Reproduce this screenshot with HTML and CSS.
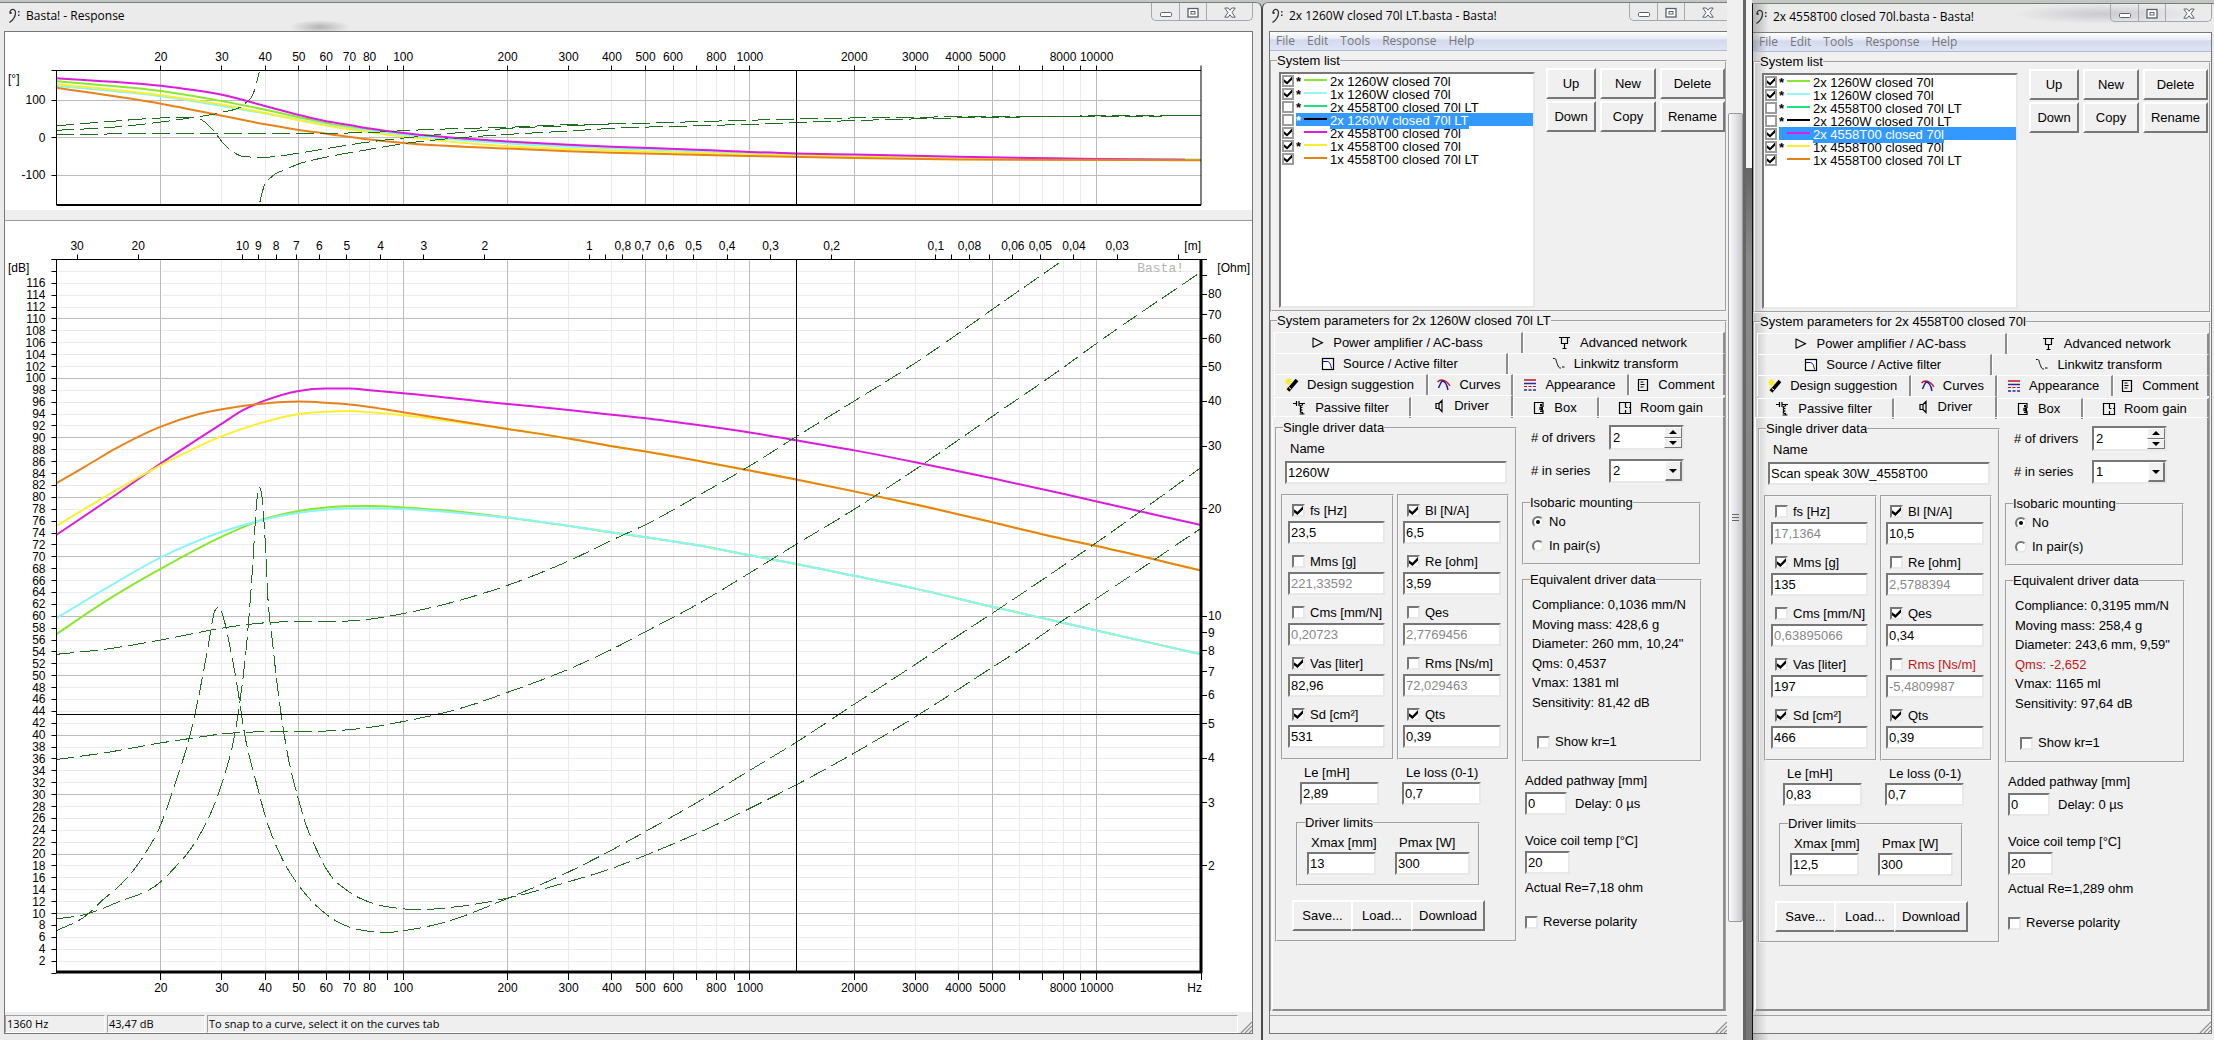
FILE: index.html
```html
<!DOCTYPE html>
<html lang="en">
<head>
<meta charset="utf-8">
<title>Basta! - Response</title>
<link rel="stylesheet" href="styles.css">
<script src="app.js" defer></script>
</head>
<body>
<svg class="sprite" aria-hidden="true">
  <symbol id="i-clef" viewBox="0 0 12 16"><path d="M2 5.500c-.6-5 5.500-5.500 5.500-.8C7.500 9 5 12 1.500 14.500" fill="none" stroke="#333" stroke-width="1.300"/><circle cx="2.800" cy="5" r="1.100" fill="#333"/><path d="M10 3h1.500v1.500H10zM10 6.500h1.500V8H10z" fill="#333"/></symbol>
  <symbol id="i-min" viewBox="0 0 12 12"><rect x=".5" y="5.500" width="11" height="4" rx="1" fill="#fff" stroke="#5a606b"/></symbol>
  <symbol id="i-max" viewBox="0 0 12 12"><rect x="1" y="1.500" width="10" height="8.500" fill="#fff" stroke="#5a606b" stroke-width="1.300"/><rect x="4" y="4.500" width="4" height="2.500" fill="#fff" stroke="#5a606b"/></symbol>
  <symbol id="i-close" viewBox="0 0 12 12"><path d="M.8 1h3.400L6 3.300 7.800 1h3.400L8 5.500l3.200 4.700H7.800L6 7.700l-1.800 2.500H.8L4 5.500z" fill="#fff" stroke="#5a606b"/></symbol>
  <symbol id="i-grip" viewBox="0 0 12 12"><path d="M1 12 12 1M5 12l7-7M9 12l3-3" stroke="#8d8d8d" stroke-width="1.200"/></symbol>
  <symbol id="i-amp" viewBox="0 0 14 14"><path d="M2 1.500v10M2 2l9.500 4.700L2 11.300" fill="none" stroke="#000" stroke-width="1.100"/></symbol>
  <symbol id="i-net" viewBox="0 0 14 14"><path d="M1 1.500h11M3.500 1.500v6h6v-6M6.500 7.500v5M4.500 12.500h4" fill="none" stroke="#000" stroke-width="1.200"/></symbol>
  <symbol id="i-source" viewBox="0 0 14 14"><rect x="1.500" y="1.500" width="11" height="11" fill="#fff" stroke="#000" stroke-width="1.200"/><path d="M2 4.500h4c2.500 0 3.500 2 4.500 7" fill="none" stroke="#00a"/></symbol>
  <symbol id="i-link" viewBox="0 0 14 14"><path d="M1 1.500h1.500c2 0 1.500 3 3 6 1 2.500 1.500 3.500 3 3.500h.5M10 10h2.500" fill="none" stroke="#000"/></symbol>
  <symbol id="i-wand" viewBox="0 0 14 14"><path d="M3.500 0v7M0 3.500h7M1 1l5 5M6 1 1 6M2 8v4" stroke="#f4ee20" stroke-width="1.200"/><path d="M3 12.500 12 2" stroke="#000" stroke-width="3.600"/><path d="M4 9.500 6 11" stroke="#fff"/></symbol>
  <symbol id="i-curves" viewBox="0 0 14 14"><path d="M.5 4C3 1 8.500.5 13 8" fill="none" stroke="#d01818" stroke-width="1.400"/><path d="M1.500 10C3 7 3.500 5 5 3c3 0 5 4 6 9" fill="none" stroke="#1818b0" stroke-width="1.400"/></symbol>
  <symbol id="i-look" viewBox="0 0 14 14"><path d="M1 2h12" stroke="#c01414" stroke-width="1.500"/><path d="M1 5.500h12" stroke="#2828a0" stroke-width="1.500"/><path d="M1 8.500h12" stroke="#c01414" stroke-width="1.200" stroke-dasharray="3 1.500"/><path d="M1 12h12" stroke="#2828a0" stroke-width="1.500" stroke-dasharray="3 1.500"/></symbol>
  <symbol id="i-note" viewBox="0 0 14 14"><path d="M2.500 1.500h9v11h-9zM4.500 4h3M4.500 6.500h4M4.500 9h3" fill="none" stroke="#000" stroke-width="1.200"/></symbol>
  <symbol id="i-passive" viewBox="0 0 14 14"><path d="M0 2.500h3M3.500 0v5M6 0v5M6 2.500h6M9.500 2.500v1.500c-3 0-3 2.500 0 2.500-3 0-3 2.500 0 2.500-3 0-3 2.500 0 2.500v1M6.500 13h5" fill="none" stroke="#000" stroke-width="1.200"/></symbol>
  <symbol id="i-driver" viewBox="0 0 14 14"><path d="M4 4.500h3v5H4zM7 4.500 10 1.500v11L7 9.500" fill="none" stroke="#000" stroke-width="1.200"/></symbol>
  <symbol id="i-box" viewBox="0 0 14 14"><path d="M11 1.500H2.500v11H11v-3L8 8.500v-2l3-1zM8 10.500h3M11 1.500v3" fill="none" stroke="#000" stroke-width="1.200"/><path d="M8 3h2v2H8zM9 6h2v3H9z"/></symbol>
  <symbol id="i-room" viewBox="0 0 14 14"><path d="M1.500 1.500h11v11h-11zM7.500 1.500v5M7.500 9v3.500M7.500 6.500h2M11 6.500h1.500" fill="none" stroke="#000" stroke-width="1.200"/></symbol>
</svg>

<main class="desktop">
  <section class="window window--response">
    <header class="titlebar titlebar--response">
      <svg class="clef"><use href="#i-clef"/></svg>
      <h1 class="title">Basta! - Response</h1>
      <div class="caption">
        <button class="caption-btn" aria-label="Minimize"><svg class="glyph"><use href="#i-min"/></svg></button>
        <button class="caption-btn" aria-label="Maximize"><svg class="glyph"><use href="#i-max"/></svg></button>
        <button class="caption-btn caption-btn--close" aria-label="Close"><svg class="glyph"><use href="#i-close"/></svg></button>
      </div>
    </header>
    <div class="client">
      <svg class="chart chart--phase" id="phase" role="img" aria-label="Phase"></svg>
      <div class="splitter"></div>
      <svg class="chart chart--level" id="level" role="img" aria-label="Level and impedance"></svg>
      <footer class="status">
        <span class="pane pane--freq">1360 Hz</span>
        <span class="pane pane--level">43,47 dB</span>
        <span class="pane pane--hint">To snap to a curve, select it on the curves tab</span>
        <svg class="grip"><use href="#i-grip"/></svg>
      </footer>
    </div>
  </section>
  <section class="window window--system window--first" id="system-a"></section>
  <div class="divider">
    <div class="scroll"><div class="thumb"><i></i><i></i><i></i></div></div>
    <div class="edge"></div>
  </div>
  <section class="window window--system window--second" id="system-b"></section>
</main>
</body>
</html>
```
FILE: styles.css
```css
* { box-sizing: border-box; }

body {
  margin: 0;
  background: #c4c6c4;
  color: #000;
  font: 13px/16px "Liberation Sans", Arial, sans-serif;
}

button, input, select { font: inherit; color: inherit; }

.sprite { display: none; }

.desktop {
  display: flex;
  min-height: 100vh;
  overflow: hidden;
}

/* windows */

.window {
  display: flex;
  flex-direction: column;
  margin-top: 2px;
  padding-bottom: 6px;
  border-top: 1px solid #7b7f7b;
  background: #ebebeb;
}

.window--response {
  flex: 1;
  min-width: 0;
  padding-left: 4px;
  padding-right: 8px;
  border-right: 1px solid #4a4a4a;
  border-radius: 0 6px 0 0;
}

.window--first {
  flex: 0 0 465px;
  padding-left: 6px;
  border-left: 1px solid #4a4a4a;
  border-radius: 6px 0 0 0;
  overflow: hidden;
}

.window--second {
  flex: 0 0 462px;
  margin-top: 3px;
  padding-right: 2px;
  border-left: 1px solid #111;
  background: linear-gradient(90deg, #b0b0b0, #ebebeb 16px);
}

.titlebar {
  display: flex;
  align-items: flex-start;
  height: 28px;
  padding-left: 2px;
}

.titlebar--response {
  padding-left: 4px;
  background: radial-gradient(ellipse 30px 7px at 316px 24px, #b4b4b4, transparent);
}

.window--first .titlebar { margin-right: -4px; }

.window--second .titlebar {
  background: radial-gradient(ellipse 90px 10px at 350px 10px, #c9c9cf, transparent);
}

.clef {
  width: 12px;
  height: 16px;
  margin: 5px 6px 0 0;
}

.title {
  flex: 1;
  margin: 5px 0 0;
  font: 12px/16px "Open Sans", "Noto Sans", sans-serif;
  white-space: nowrap;
}

.caption {
  display: flex;
  border: 1px solid #a4a7ab;
  border-top: 0;
  border-radius: 0 0 5px 5px;
}

.caption-btn {
  width: 27px;
  height: 17px;
  padding: 2px 0 0;
  border: 0;
  border-left: 1px solid #a4a7ab;
  background: none;
  line-height: 0;
}

.caption-btn:first-child { border-left: 0; }
.caption-btn--close { width: 46px; }

.glyph {
  width: 12px;
  height: 12px;
}

.client {
  flex: 1;
  display: flex;
  flex-direction: column;
  min-width: 0;
  border: 1px solid #777;
  background: #efefef;
}

.window--system .client { background: #f0f0f0; }
.window--first .client { border-right: 0; }
.window--second .client {
  border-left: 0;
  background: linear-gradient(90deg, #c4c4c4, #f0f0f0 14px);
}

/* charts */

.chart {
  display: block;
  width: 100%;
  background: #fff;
  font: 12px "Liberation Sans", Arial, sans-serif;
}

.chart--phase { height: 178px; }
.chart--level { flex: 1; min-height: 400px; }
.splitter { height: 11px; border-bottom: 1px solid #999; }

.grid-minor { stroke: #ebebeb; }
.grid-major { stroke: #bcbcbc; }
.axis { stroke: #000; }
.axis--thick { stroke-width: 3; }
.curve { fill: none; stroke-width: 2; }
.curve--dashed {
  stroke: #1c6e1c;
  stroke-width: 1;
  stroke-dasharray: 18 6;
  shape-rendering: crispEdges;
}
.watermark { font: 13px "Liberation Mono", monospace; fill: #b4b4b4; }

/* status bar */

.status {
  display: flex;
  align-items: flex-end;
  gap: 2px;
  height: 21px;
  padding-top: 3px;
  font: 11px/16px "Open Sans", "Noto Sans", sans-serif;
}

.pane {
  padding-left: 1px;
  border: 1px solid;
  border-color: #a0a0a0 #fff #fff #a0a0a0;
  white-space: nowrap;
}

.pane--freq { width: 100px; }
.pane--level { width: 98px; }
.pane--hint { flex: 1; }

/* menu */

.menu {
  display: flex;
  gap: 12px;
  height: 19px;
  padding: 1px 6px 0;
  border-bottom: 1px solid #b4b9d0;
  background: linear-gradient(#fff, #e9edf7 35%, #d3daee 45%, #dfe4f3);
  font: 12px/16px "Open Sans", "Noto Sans", sans-serif;
}

.window--second .menu {
  background:
    linear-gradient(90deg, rgba(0, 0, 0, .25), transparent 14px),
    linear-gradient(#fff, #e9edf7 35%, #d3daee 45%, #dfe4f3);
}

.menu a {
  color: #777;
  text-decoration: none;
}

/* group boxes */

.group {
  min-width: 0;
  margin: 0;
  padding: 0;
  border: 2px groove #f4f4f4;
}

.group legend {
  margin-left: 5px;
  padding: 0;
  line-height: 15px;
}

.group--systems {
  margin-top: 2px;
  padding: 0 0 2px 7px;
}

.group--systems > legend,
.group--iso > legend,
.group--data > legend,
.group--limits > legend { margin-left: -2px; }

.group--driver > legend { margin-left: 2px; }

.systems {
  display: flex;
  gap: 11px;
}

.list {
  flex: 0 0 256px;
  height: 236px;
  margin: 4px 0 0;
  padding: 0;
  border: 2px solid;
  border-color: #777 #e8e8e8 #e8e8e8 #777;
  background: #fff;
  list-style: none;
}

.list li {
  display: flex;
  align-items: center;
  height: 13px;
  padding-left: 1px;
}

.list input[type="checkbox"] {
  width: 12px;
  height: 12px;
  border: 2px solid #9c9c9c;
}

.row {
  flex: 1;
  display: flex;
  height: 13px;
  margin-left: 2px;
}

.row b { width: 8px; }

.swatch {
  width: 23px;
  height: 2px;
  margin: 5px 3px 0 0;
}

.selected .row {
  background: #3399ff;
  color: #fff;
}

.selected .name { height: 16px; background: #3399ff; }

.actions {
  display: grid;
  grid-template-columns: 50px 56px 65px;
  gap: 2px 4px;
  align-content: start;
}

.btn {
  height: 31px;
  padding: 0;
  border: 2px solid;
  border-color: #fff #777 #777 #fff;
  background: #f0f0f0;
}

.group--params {
  flex: 1;
  display: flex;
  flex-direction: column;
  margin-top: 1px;
  border-bottom: 0;
}

/* tabs */

.tabs { padding: 4px 0 0 2px; }

.tab-row {
  display: grid;
  height: 21px;
}

.tab-row--1 { grid-template-columns: 249fr 202fr; }
.tab-row--2 { grid-template-columns: 234fr 217fr; }
.tab-row--3 { grid-template-columns: 154fr 85fr 116fr 96fr; }
.tab-row--4 { grid-template-columns: 137fr 102fr 86fr 126fr; align-items: end; }

.tab {
  display: flex;
  align-items: center;
  justify-content: center;
  gap: 8px;
  height: 21px;
  padding: 0 2px 1px 0;
  border: 0;
  border-top: 1px solid #fff;
  border-left: 1px solid #fff;
  border-right: 2px solid #8c8c8c;
  background: none;
  white-space: nowrap;
}

.tab--active {
  height: 23px;
  padding-bottom: 3px;
}

.tab svg {
  width: 14px;
  height: 14px;
}

.page {
  flex: 1;
  display: flex;
  gap: 5px;
  padding: 3px 0 0 2px;
  border: 1px solid #fff;
  border-right: 2px solid #8c8c8c;
  border-bottom: 2px solid #8c8c8c;
}

/* fields */

.field {
  display: block;
  width: 100%;
  height: 23px;
  padding: 0 1px 1px;
  border: 2px solid;
  border-color: #777 #e8e8e8 #e8e8e8 #777;
  border-radius: 0;
  background: #fff;
}

.field:read-only { color: #888; }

input[type="checkbox"], input[type="radio"] {
  appearance: none;
  flex: none;
  width: 13px;
  height: 13px;
  margin: 0;
  border: 2px solid;
  border-color: #777 #e8e8e8 #e8e8e8 #777;
  background: #fff;
}

input[type="checkbox"]:checked::before {
  content: "";
  display: block;
  height: 100%;
  background: #000;
  clip-path: polygon(0 35%, 38% 65%, 100% 0, 100% 40%, 38% 100%, 0 70%);
}

input[type="radio"] {
  width: 12px;
  height: 12px;
  border-radius: 50%;
}

input[type="radio"]:checked::before {
  content: "";
  display: block;
  width: 4px;
  height: 4px;
  margin: 2px;
  border-radius: 50%;
  background: #000;
}

.tick {
  display: flex;
  align-items: center;
  gap: 5px;
  white-space: nowrap;
}

/* left column */

.group--driver {
  flex: 0 0 242px;
  align-self: flex-start;
  padding: 5px 6px 9px 4px;
}

.name-field {
  display: grid;
  gap: 3px;
  margin: 0 2px 10px 4px;
}

.name-field label { padding-left: 5px; line-height: 18px; }

.boxes {
  display: grid;
  grid-template-columns: 113px 112px;
  gap: 3px;
}

.box {
  display: grid;
  gap: 7px;
  padding: 4px 7px 10px 5px;
  border: 2px groove #f4f4f4;
}

.box .tick { height: 21px; padding-left: 4px; }
.box--motor { padding: 4px 6px 10px 4px; }

.coil {
  display: grid;
  grid-template-columns: 79px 79px;
  gap: 23px;
  margin: 4px 0 10px 19px;
}

.stack label {
  display: block;
  padding-left: 4px;
  line-height: 18px;
  white-space: nowrap;
}

.group--limits {
  width: 184px;
  margin-left: 15px;
  padding: 4px 9px 9px 9px;
}

.limits {
  display: grid;
  grid-template-columns: 69px 75px;
  gap: 19px;
}

.file-actions {
  display: grid;
  grid-template-columns: 59px 60px 74px;
  margin: 14px 0 0 11px;
}

.file-actions .btn { border-right-width: 0; }
.file-actions .btn:last-child { border-right-width: 2px; }

/* right column */

.side { flex: 0 0 181px; }

.count {
  display: grid;
  grid-template-columns: 78px 75px;
  align-items: center;
  margin: 5px 0 9px 9px;
}

.count--series { margin-bottom: 12px; }

.combo {
  display: flex;
  height: 25px;
  border: 2px solid;
  border-color: #777 #e8e8e8 #e8e8e8 #777;
  background: #fff;
}

.count--series .combo { height: 24px; }

.combo input, .combo select {
  flex: 1;
  min-width: 0;
  padding: 0 0 0 2px;
  border: 0;
  background: none;
  appearance: none;
}

.combo input { appearance: textfield; }
.combo input::-webkit-inner-spin-button { display: none; }

.spin {
  display: grid;
  width: 18px;
}

.spin button, .drop {
  display: flex;
  align-items: center;
  justify-content: center;
  min-height: 0;
  padding: 0;
  border: 1px solid;
  border-color: #fff #777 #777 #fff;
  background: #f0f0f0;
}

.drop { width: 17px; border-width: 1px 2px 2px 1px; }

.up, .down {
  border: 4px solid transparent;
  border-top-width: 0;
  border-bottom: 4px solid #000;
}

.down {
  border-top: 4px solid #000;
  border-bottom-width: 0;
}

.group--iso {
  width: 179px;
  padding: 2px 0 7px 8px;
}

.group--iso .tick { height: 20px; }
.group--iso .tick + .tick { margin-top: 4px; }

.group--data {
  margin-top: 7px;
  width: 180px;
  height: 190px;
  padding: 8px 0 0 8px;
}

.data {
  margin: 0;
  padding: 0;
  list-style: none;
  line-height: 20px;
  white-space: nowrap;
}

.data li:nth-child(even) { line-height: 19px; }
.group--data .tick { margin: 22px 0 0 5px; }
.bad { color: #c01818; }

.extra {
  display: grid;
  justify-items: start;
  padding-left: 3px;
}

.extra label { white-space: nowrap; }
.extra .pathway { margin-top: 11px; }

.delay {
  display: flex;
  align-items: center;
  gap: 8px;
  margin: 3px 0 18px;
}

.delay .field { width: 42px; }
.extra .temp { width: 45px; margin: 2px 0 6px; }
.extra .tick { margin-top: 18px; }

.status--system {
  margin-top: 4px;
  height: 18px;
  padding: 0;
  border-top: 1px solid #a0a0a0;
  justify-content: flex-end;
}

.grip { width: 12px; height: 12px; }

/* bar between the two system windows */

.divider {
  flex: 0 0 25px;
  display: flex;
  background: #f0f0f0;
}

.scroll {
  flex: 0 0 16px;
  display: flex;
  flex-direction: column;
  padding: 113px 0 118px 1px;
}

.thumb {
  flex: 1;
  display: flex;
  flex-direction: column;
  align-items: center;
  justify-content: center;
  gap: 2px;
  border: 1px solid #999;
  border-radius: 2px;
  background: linear-gradient(90deg, #fafafa, #e4e4e8 50%, #c8c8cc);
}

.thumb i { width: 7px; height: 1px; background: #666; }

.edge {
  flex: 1;
  border-left: 3px solid #666;
  background: linear-gradient(#f4f4f4 168px, #666 168px, #8a8a8a 260px, #777);
}
```
FILE: app.js
```js
/* ---------- system windows ---------- */

const icon = (id, cls = '') => `<svg class="${cls}"><use href="#i-${id}"/></svg>`;

const systems = [
  ['2x 1260W closed 70l', '#8ae234', true, true],
  ['1x 1260W closed 70l', '#9af4f4', true, true],
  ['2x 4558T00 closed 70l LT', '#22e07a', false, true],
  ['2x 1260W closed 70l LT', '#000', false, true],
  ['2x 4558T00 closed 70l', '#e01ce0', true, false],
  ['1x 4558T00 closed 70l', '#f8ee30', true, true],
  ['1x 4558T00 closed 70l LT', '#e88018', true, false],
];

const tabRows = [
  [['amp', 'Power amplifier / AC-bass'], ['net', 'Advanced network']],
  [['source', 'Source / Active filter'], ['link', 'Linkwitz transform']],
  [['wand', 'Design suggestion'], ['curves', 'Curves'], ['look', 'Appearance'], ['note', 'Comment']],
  [['passive', 'Passive filter'], ['driver', 'Driver'], ['box', 'Box'], ['room', 'Room gain']],
];

const windows = [
  {
    host: 'system-a', title: '2x 1260W closed 70l LT.basta - Basta!', selected: 3,
    heading: '2x 1260W closed 70l LT', name: '1260W', drivers: 2, series: 2,
    suspension: [['fs [Hz]', '23,5', 1], ['Mms [g]', '221,33592', 0], ['Cms [mm/N]', '0,20723', 0], ['Vas [liter]', '82,96', 1], ['Sd [cm²]', '531', 1]],
    motor: [['Bl [N/A]', '6,5', 1], ['Re [ohm]', '3,59', 1], ['Qes', '2,7769456', 0], ['Rms [Ns/m]', '72,029463', 0], ['Qts', '0,39', 1]],
    data: ['Compliance: 0,1036 mm/N', 'Moving mass: 428,6 g', 'Diameter: 260 mm, 10,24"', 'Qms: 0,4537', 'Vmax: 1381 ml', 'Sensitivity: 81,42 dB'],
    le: '2,89', loss: '0,7', xmax: '13', pmax: '300', re: '7,18',
  },
  {
    host: 'system-b', title: '2x 4558T00 closed 70l.basta - Basta!', selected: 4,
    heading: '2x 4558T00 closed 70l', name: 'Scan speak 30W_4558T00', drivers: 2, series: 1,
    suspension: [['fs [Hz]', '17,1364', 0], ['Mms [g]', '135', 1], ['Cms [mm/N]', '0,63895066', 0], ['Vas [liter]', '197', 1], ['Sd [cm²]', '466', 1]],
    motor: [['Bl [N/A]', '10,5', 1], ['Re [ohm]', '2,5788394', 0], ['Qes', '0,34', 1], ['Rms [Ns/m]', '-5,4809987', 0], ['Qts', '0,39', 1]],
    data: ['Compliance: 0,3195 mm/N', 'Moving mass: 258,4 g', 'Diameter: 243,6 mm, 9,59"', 'Qms: -2,652', 'Vmax: 1165 ml', 'Sensitivity: 97,64 dB'],
    le: '0,83', loss: '0,7', xmax: '12,5', pmax: '300', re: '1,289',
  },
];

function parameter(host, [label, value, on]) {
  const id = `${host}-${label.split(' ')[0].toLowerCase()}`;
  const bad = value.startsWith('-') ? ' bad' : '';
  return `<div>
    <label class="tick${bad}"><input type="checkbox"${on ? ' checked' : ''}>${label}</label>
    <input class="field" id="${id}" type="text" aria-label="${label}" value="${value}"${on ? '' : ' readonly'}>
  </div>`;
}

function stack(host, key, label, value) {
  return `<div class="stack"><label for="${host}-${key}">${label}</label><input class="field" id="${host}-${key}" type="text" value="${value}"></div>`;
}

function systemWindow(w) {
  const h = w.host;
  return `
  <header class="titlebar">
    ${icon('clef', 'clef')}
    <h2 class="title">${w.title}</h2>
    <div class="caption">
      <button class="caption-btn" aria-label="Minimize">${icon('min', 'glyph')}</button>
      <button class="caption-btn" aria-label="Maximize">${icon('max', 'glyph')}</button>
      <button class="caption-btn caption-btn--close" aria-label="Close">${icon('close', 'glyph')}</button>
    </div>
  </header>
  <div class="client">
    <nav class="menu">${['File', 'Edit', 'Tools', 'Response', 'Help'].map(m => `<a href="#">${m}</a>`).join('')}</nav>
    <fieldset class="group group--systems">
      <legend>System list</legend>
      <div class="systems">
        <ul class="list">${systems.map(([name, color, on, star], i) => `
          <li${i === w.selected ? ' class="selected"' : ''}>
            <input type="checkbox" id="${h}-s${i}"${on ? ' checked' : ''}>
            <label class="row" for="${h}-s${i}"><b>${star ? '*' : ''}</b><span class="swatch" style="background:${color}"></span><span class="name">${name}</span></label>
          </li>`).join('')}
        </ul>
        <div class="actions">${['Up', 'New', 'Delete', 'Down', 'Copy', 'Rename'].map(b => `<button class="btn">${b}</button>`).join('')}</div>
      </div>
    </fieldset>
    <fieldset class="group group--params">
      <legend>System parameters for ${w.heading}</legend>
      <div class="tabs" role="tablist">${tabRows.map((row, i) => `
        <div class="tab-row tab-row--${i + 1}">${row.map(([ic, t]) =>
          `<button class="tab${t === 'Driver' ? ' tab--active' : ''}" role="tab">${icon(ic)}${t}</button>`).join('')}</div>`).join('')}
      </div>
      <div class="page">
        <fieldset class="group group--driver">
          <legend>Single driver data</legend>
          <div class="name-field"><label for="${h}-name">Name</label><input class="field" id="${h}-name" type="text" value="${w.name}"></div>
          <div class="boxes">
            <div class="box">${w.suspension.map(p => parameter(h, p)).join('')}</div>
            <div class="box box--motor">${w.motor.map(p => parameter(h, p)).join('')}</div>
          </div>
          <div class="coil">${stack(h, 'le', 'Le [mH]', w.le)}${stack(h, 'loss', 'Le loss (0-1)', w.loss)}</div>
          <fieldset class="group group--limits">
            <legend>Driver limits</legend>
            <div class="limits">${stack(h, 'xmax', 'Xmax [mm]', w.xmax)}${stack(h, 'pmax', 'Pmax [W]', w.pmax)}</div>
          </fieldset>
          <div class="file-actions"><button class="btn">Save...</button><button class="btn">Load...</button><button class="btn">Download</button></div>
        </fieldset>
        <div class="side">
          <div class="count"><label for="${h}-n"># of drivers</label>
            <div class="combo"><input id="${h}-n" type="number" value="${w.drivers}"><span class="spin"><button aria-label="More"><i class="up"></i></button><button aria-label="Fewer"><i class="down"></i></button></span></div></div>
          <div class="count count--series"><label for="${h}-series"># in series</label>
            <div class="combo"><select id="${h}-series"><option>${w.series}</option></select><span class="drop"><i class="down"></i></span></div></div>
          <fieldset class="group group--iso">
            <legend>Isobaric mounting</legend>
            <label class="tick"><input type="radio" name="${h}-iso" checked>No</label>
            <label class="tick"><input type="radio" name="${h}-iso">In pair(s)</label>
          </fieldset>
          <fieldset class="group group--data">
            <legend>Equivalent driver data</legend>
            <ul class="data">${w.data.map(d => `<li${d.includes(': -') ? ' class="bad"' : ''}>${d}</li>`).join('')}</ul>
            <label class="tick"><input type="checkbox">Show kr=1</label>
          </fieldset>
          <div class="extra">
            <label class="pathway" for="${h}-path">Added pathway [mm]</label>
            <div class="delay"><input class="field" id="${h}-path" type="text" value="0"><span>Delay: 0 µs</span></div>
            <label for="${h}-temp">Voice coil temp [°C]</label>
            <input class="field temp" id="${h}-temp" type="text" value="20">
            <span>Actual Re=${w.re} ohm</span>
            <label class="tick"><input type="checkbox">Reverse polarity</label>
          </div>
        </div>
      </div>
    </fieldset>
    <footer class="status status--system">${icon('grip', 'grip')}</footer>
  </div>`;
}

windows.forEach(w => { document.getElementById(w.host).innerHTML = systemWindow(w); });

/* ---------- charts ---------- */

const GREEN = '#8ae82c', CYAN = '#8cf4f6', YELLOW = '#f8f030', ORANGE = '#e8821a', MAGENTA = '#dc1cdc';

/* [frequency in Hz, level in dB] */
const cyanTail = [200, 76.6, 300, 75.2, 400, 74.1, 500, 73.3, 700, 72, 1000, 70.25, 1360, 68.8, 2000, 66.8, 3000, 64.65, 5000, 61.6, 8000, 58.9, 10000, 57.6, 20000, 53.6];
const orangeTail = [200, 91.5, 300, 89.9, 400, 88.6, 500, 87.7, 700, 86.2, 1000, 84.5, 1360, 83, 2000, 81, 3000, 78.8, 5000, 75.8, 8000, 73, 10000, 71.8, 20000, 67.7];
const levelCurves = [
  [GREEN, [10, 57, 14, 62.7, 20, 68, 30, 73.4, 40, 76.4, 50, 77.7, 60, 78.3, 80, 78.55, 100, 78.3, 150, 77.5, ...cyanTail]],
  [CYAN, [10, 59.7, 14, 64.8, 20, 69.9, 30, 74.2, 40, 76.3, 50, 77.4, 60, 77.9, 80, 78.15, 100, 78.05, 150, 77.3, ...cyanTail]],
  [MAGENTA, [10, 73.7, 14.3, 79.8, 20, 85.7, 30, 92.4, 34.6, 94.7, 40, 96.3, 50, 97.9, 60, 98.3, 70, 98.3, 80, 98, 100, 97.5, 200, 95.7, 300, 94.7, 400, 93.9, 500, 93.3, 700, 92.2, 1000, 90.9, 1360, 89.6, 2000, 87.9, 3000, 85.9, 5000, 83.2, 8000, 80.6, 10000, 79.3, 20000, 75.35]],
  [YELLOW, [10, 75.2, 13.9, 80.2, 20, 85.4, 30, 90.3, 40, 92.7, 50, 94, 60, 94.4, 70, 94.5, 80, 94.3, 100, 93.8, 150, 92.5, ...orangeTail]],
  [ORANGE, [10, 82.4, 12.2, 85.3, 14.7, 88.1, 20, 91.9, 25, 93.8, 30, 94.8, 40, 95.8, 50, 96.1, 60, 95.9, 70, 95.6, 80, 95.2, 100, 94.3, ...orangeTail]],
];

/* impedance traces, on the same scale */
const impedanceCurves = [
  [10, 53.6, 14, 54.5, 20, 56, 30, 58, 40, 58.9, 50, 59.1, 60, 59.1, 80, 59.5, 100, 60.45, 150, 62.9, 200, 65.2, 300, 69.3, 421, 73.4, 500, 75.4, 700, 80.1, 1000, 85.3, 1360, 90.2, 2000, 96.2, 3000, 102.6, 4000, 107.6, 5000, 111.6, 8050, 120],
  [10, 35.9, 14, 37.1, 20, 38.7, 25, 39.55, 30, 40.2, 40, 40.6, 60, 40.7, 80, 41.3, 100, 42.3, 150, 44.7, 200, 47.2, 300, 51.1, 421, 55.1, 500, 57.4, 700, 61.9, 1000, 67.3, 1360, 72.1, 2000, 78, 3000, 84.7, 5000, 93.6, 8000, 101.8, 10000, 105.9, 20000, 117.9],
  [10, 9.1, 12.2, 9.9, 15, 11.9, 20, 15.35, 22, 17.8, 24.2, 20.6, 28.5, 28.3, 30, 31.9, 33.4, 43.5, 35.45, 56.1, 36.9, 69.6, 37.7, 78.5, 38.4, 81.6, 39, 80.8, 40, 72.4, 40.55, 64.8, 42, 55.5, 44.3, 44.1, 46.5, 36.5, 50, 29, 52.4, 25, 56.2, 20.8, 60, 17.5, 70, 13.6, 80, 11.9, 100, 10.8, 110, 10.6, 130, 10.9, 150, 11.3, 200, 12.6, 300, 15.35, 400, 17.6, 500, 19.8, 700, 23.4, 1000, 27.7, 1360, 31.65, 2000, 37, 3000, 43.1, 5000, 51.4, 6170, 54.8, 8000, 59.3, 10000, 63, 20000, 74.8],
  [10, 7.1, 12.2, 9.7, 13.6, 12.3, 15.4, 15, 17.7, 19.4, 20, 25, 22.1, 32.3, 24.25, 39.9, 25.6, 46, 27.5, 55.6, 28.5, 60.6, 29.35, 61.5, 30.1, 60.3, 31.5, 55.5, 33.2, 48.3, 34.95, 39.9, 37.7, 32, 40, 26.4, 44.6, 19.4, 50, 14.7, 56.2, 11.3, 65.2, 8.5, 80, 7, 90, 6.8, 100, 7.1, 131, 8.5, 200, 12.55, 300, 17, 400, 20.7, 500, 23.8, 700, 28.6, 1000, 34.1, 1360, 38.8, 2000, 45.2, 3000, 51.9, 4000, 56.8, 5000, 60.5, 8000, 68.5, 10000, 72.4, 20000, 85],
];

/* [frequency in Hz, phase in degrees] */
const phaseCurves = [
  [GREEN, [10, 151, 20, 125, 30, 98, 40, 75, 50, 55, 60, 39, 80, 21, 100, 11, 200, -13, 400, -27, 1000, -40, 4000, -54, 20000, -59]],
  [CYAN, [10, 139, 20, 111, 30, 85, 40, 65, 50, 49, 60, 35, 80, 19, 100, 8, 200, -15, 400, -28, 1000, -41, 4000, -54, 20000, -59]],
  [YELLOW, [10, 144, 20, 114, 30, 89, 40, 66, 50, 47, 60, 33, 80, 15, 100, 3, 200, -23, 400, -34, 1000, -45, 4000, -56, 20000, -60]],
  [MAGENTA, [10, 159, 20, 139, 30, 115, 40, 85, 50, 61, 60, 44, 70, 34, 80, 25, 100, 13, 150, -2, 200, -10, 300, -19, 400, -24, 700, -32, 1360, -42, 2000, -45, 4000, -51, 10000, -57, 18000, -59]],
  [ORANGE, [10, 134, 20, 91, 30, 59, 40, 36, 50, 21, 60, 11, 80, -5, 100, -14, 200, -29, 300, -36, 400, -40, 1000, -49, 2000, -54, 4000, -58, 20000, -60]],
];
const impedancePhase = [
  [10, 9, 14, 10, 50, 11, 60, 12, 80, 14, 100, 19, 150, 25, 200, 28, 300, 35, 400, 37, 1000, 47, 2000, 53, 3000, 55, 8000, 58, 20000, 59],
  [10, 20, 14, 27, 20, 42, 25, 55, 30, 68, 35, 92, 36.9, 117, 37.7, 144, 38.4, 175],
  [38.6, -172, 39.6, -132, 41.7, -105, 45.8, -85, 50, -70, 60, -52, 80, -31, 100, -16, 150, 1, 200, 9, 300, 18, 400, 25, 700, 32, 1000, 36, 2000, 46, 4000, 53, 20000, 59],
  [10, 32, 14, 43, 20, 53, 24.5, 55, 26.6, 44, 28.5, 17, 30.1, -12, 32.3, -38, 34.95, -51, 40, -52, 50, -41, 60, -29, 80, -11, 100, -1, 150, 15, 200, 25, 300, 32, 400, 36],
];

const frequencies = [20, 30, 40, 50, 60, 70, 80, 90, 100, 200, 300, 400, 500, 600, 700, 800, 900, 1000,
  2000, 3000, 4000, 5000, 6000, 7000, 8000, 9000, 10000];
const unlabelled = [90, 700, 900, 6000, 7000, 9000];
const wavelengths = [30, 20, 10, 9, 8, 7, 6, 5, 4, 3, 2, 1, 0.9, 0.8, 0.7, 0.6, 0.5, 0.4, 0.3, 0.2, 0.1, 0.09, 0.08, 0.07, 0.06, 0.05, 0.04, 0.03, 0.02];
const SOUND = 344;
const CURSOR = { hz: 1360, db: 43.47 };

const line = (x1, y1, x2, y2, cls) => `<path class="${cls}" d="M${x1} ${y1}L${x2} ${y2}"/>`;
const text = (x, y, s, anchor = 'middle', cls = '') => `<text class="${cls}" x="${x}" y="${y}" text-anchor="${anchor}">${s}</text>`;
const snap = v => Math.floor(v) + 0.5;
const isMajor = f => /^[125]/.test(String(f));

/* smooth path that never overshoots its points */
function smooth(points) {
  const n = points.length, m = [], d = [];
  for (let i = 0; i < n - 1; i++) d[i] = (points[i + 1][1] - points[i][1]) / (points[i + 1][0] - points[i][0]);
  for (let i = 0; i < n; i++) {
    if (i === 0) m[i] = d[0];
    else if (i === n - 1) m[i] = d[n - 2];
    else if (d[i - 1] * d[i] <= 0) m[i] = 0;
    else {
      const a = points[i][0] - points[i - 1][0], b = points[i + 1][0] - points[i][0];
      const mean = (d[i - 1] * b + d[i] * a) / (a + b);
      m[i] = Math.sign(mean) * Math.min(Math.abs(mean), 3 * Math.abs(d[i - 1]), 3 * Math.abs(d[i]));
    }
  }
  let path = `M${points[0]}`;
  for (let i = 0; i < n - 1; i++) {
    const [x0, y0] = points[i], [x1, y1] = points[i + 1], h = (x1 - x0) / 3;
    path += `C${x0 + h},${y0 + m[i] * h} ${x1 - h},${y1 - m[i + 1] * h} ${x1},${y1}`;
  }
  return path;
}

function curve(flat, x, y, color) {
  const points = [];
  for (let i = 0; i < flat.length; i += 2) points.push([x(flat[i]), y(flat[i + 1])]);
  return color
    ? `<path class="curve" stroke="${color}" d="${smooth(points)}"/>`
    : `<path class="curve curve--dashed" d="${smooth(points)}"/>`;
}

const scaleX = (left, right) => f => left + (right - left) * Math.log10(f / 10) / Math.log10(2000);

function drawPhase() {
  const svg = document.getElementById('phase');
  const left = 51.5, right = svg.clientWidth - 51, top = 38.5, bottom = 173;
  const x = scaleX(left, right), y = deg => (top + bottom) / 2 - deg * (bottom - top) / 360;
  let out = '';
  frequencies.forEach(f => { out += line(snap(x(f)), top, snap(x(f)), bottom, isMajor(f) ? 'grid-major' : 'grid-minor'); });
  [100, 0, -100].forEach(v => {
    out += line(left, snap(y(v)), right, snap(y(v)), 'grid-major') + line(left - 5, snap(y(v)), left, snap(y(v)), 'axis');
    out += text(left - 11, y(v) + 4, v, 'end');
  });
  phaseCurves.forEach(([c, pts]) => { out += curve(pts, x, y, c); });
  impedancePhase.forEach(pts => { out += curve(pts, x, y); });
  frequencies.forEach(f => {
    out += line(snap(x(f)), top - 5, snap(x(f)), top, 'axis');
    if (!unlabelled.includes(f)) out += text(x(f), 29, f);
  });
  out += line(left - 5, top, right, top, 'axis') + line(left, top, left, bottom, 'axis');
  out += line(right, top - 5, right, bottom, 'axis') + `<path class="axis" stroke-width="2" d="M${left} ${bottom}H${right}"/>`;
  out += line(snap(x(CURSOR.hz)), top, snap(x(CURSOR.hz)), bottom, 'axis') + text(3, 51, '[°]', 'start');
  svg.innerHTML = out;
}

function drawLevel() {
  const svg = document.getElementById('level');
  const left = 51.5, right = svg.clientWidth - 51, top = 38.5, bottom = svg.clientHeight - 39;
  const x = scaleX(left, right), y = db => bottom - db * (bottom - top) / 120;
  const ohm = r => bottom - Math.log10(r) * (bottom - top) / 2;
  let out = '';
  frequencies.filter(f => !isMajor(f)).forEach(f => { out += line(snap(x(f)), top, snap(x(f)), bottom, 'grid-minor'); });
  for (let db = 2; db < 120; db += 2) if (db % 10) out += line(left, snap(y(db)), right, snap(y(db)), 'grid-minor');
  for (let db = 10; db < 120; db += 10) out += line(left, snap(y(db)), right, snap(y(db)), 'grid-major');
  frequencies.filter(isMajor).forEach(f => { out += line(snap(x(f)), top, snap(x(f)), bottom, 'grid-major'); });
  for (let db = 0; db <= 120; db += 2) {
    out += line(left - 5, snap(y(db)), left, snap(y(db)), 'axis');
    if (db > 0 && db < 118) out += text(left - 11, y(db) + 4, db, 'end');
  }
  out += text(right - 17, 51, 'Basta!', 'end', 'watermark');
  levelCurves.forEach(([c, pts]) => { out += curve(pts, x, y, c); });
  impedanceCurves.forEach(pts => { out += curve(pts, x, y); });
  [...frequencies, 20000].forEach(f => {
    out += line(snap(x(f)), bottom, snap(x(f)), bottom + 7, 'axis');
    if (f < 20000 && !unlabelled.includes(f)) out += text(x(f), bottom + 19, f);
  });
  wavelengths.forEach(w => {
    const at = x(SOUND / w);
    out += line(snap(at), top - 5, snap(at), top, 'axis');
    if (![0.9, 0.09, 0.07, 0.02].includes(w)) out += text(at, 29, String(w).replace('.', ','));
  });
  [2, 3, 4, 5, 6, 7, 8, 9, 10, 20, 30, 40, 50, 60, 70, 80, 90, 100].forEach(r => {
    out += line(right, snap(ohm(r)), right + 6, snap(ohm(r)), 'axis');
    if (r < 90) out += text(right + 7, ohm(r) + 4, r, 'start');
  });
  out += line(left - 5, top, right, top, 'axis') + line(left, top, left, bottom, 'axis');
  out += line(right, top, right, bottom, 'axis axis--thick') + line(left, bottom - 1, right + 1, bottom - 1, 'axis axis--thick');
  out += line(snap(x(CURSOR.hz)), top, snap(x(CURSOR.hz)), bottom, 'axis') + line(left, snap(y(CURSOR.db)), right, snap(y(CURSOR.db)), 'axis');
  out += text(3, 51, '[dB]', 'start') + text(svg.clientWidth - 2, 51, '[Ohm]', 'end');
  out += text(right, 29, '[m]', 'end') + text(right + 1, bottom + 19, 'Hz', 'end');
  svg.innerHTML = out;
}

function draw() { drawPhase(); drawLevel(); }
window.addEventListener('resize', draw);
draw();
```
